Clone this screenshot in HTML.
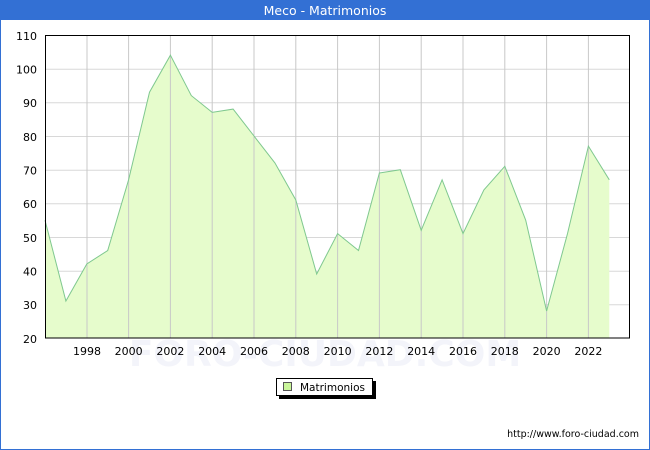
<!DOCTYPE html>
<html><head><meta charset="utf-8"><style>
html,body{margin:0;padding:0;background:#fff}
svg{display:block;font-family:"DejaVu Sans","Liberation Sans",sans-serif}
</style></head><body>
<svg width="650" height="450" viewBox="0 0 650 450">
<rect x="0.5" y="0.5" width="649" height="449" fill="#fff" stroke="#3370d4"/>
<rect x="0" y="0" width="650" height="20" fill="#3370d4"/>
<text x="325" y="15" fill="#fff" font-size="12.5" text-anchor="middle">Meco - Matrimonios</text>
<g stroke="#d8d8d8" stroke-width="1">
<line x1="45" y1="69.2" x2="630" y2="69.2"/><line x1="45" y1="102.8" x2="630" y2="102.8"/>
<line x1="45" y1="136.5" x2="630" y2="136.5"/><line x1="45" y1="170.2" x2="630" y2="170.2"/>
<line x1="45" y1="203.8" x2="630" y2="203.8"/><line x1="45" y1="237.5" x2="630" y2="237.5"/>
<line x1="45" y1="271.2" x2="630" y2="271.2"/><line x1="45" y1="304.8" x2="630" y2="304.8"/>
</g>
<polygon fill="#e6fccc" stroke="none" points="45,338 45,220.2 65.9,301 86.8,264 107.7,250.5 128.6,179.8 149.5,92.2 170.4,55.2 191.3,95.6 212.2,112.4 233.1,109.1 254,136 274.9,162.9 295.8,200 316.7,274 337.6,233.6 358.5,250.5 379.4,173 400.3,169.7 421.2,230.3 442.1,179.8 463,233.6 483.9,189.9 504.8,166.3 525.7,220.2 546.6,311 567.5,233.6 588.4,146.1 609.3,179.8 609.3,338"/>
<g stroke="#c8c8c8" stroke-width="1">
<line x1="87" y1="35" x2="87" y2="338"/><line x1="128.6" y1="35" x2="128.6" y2="338"/>
<line x1="170.4" y1="35" x2="170.4" y2="338"/><line x1="212.2" y1="35" x2="212.2" y2="338"/>
<line x1="254" y1="35" x2="254" y2="338"/><line x1="295.8" y1="35" x2="295.8" y2="338"/>
<line x1="337.6" y1="35" x2="337.6" y2="338"/><line x1="379.4" y1="35" x2="379.4" y2="338"/>
<line x1="421.2" y1="35" x2="421.2" y2="338"/><line x1="463" y1="35" x2="463" y2="338"/>
<line x1="504.8" y1="35" x2="504.8" y2="338"/><line x1="546.6" y1="35" x2="546.6" y2="338"/>
<line x1="588.4" y1="35" x2="588.4" y2="338"/>
</g>
<polyline fill="none" stroke="#7fc88f" stroke-width="1" points="45,220.2 65.9,301 86.8,264 107.7,250.5 128.6,179.8 149.5,92.2 170.4,55.2 191.3,95.6 212.2,112.4 233.1,109.1 254,136 274.9,162.9 295.8,200 316.7,274 337.6,233.6 358.5,250.5 379.4,173 400.3,169.7 421.2,230.3 442.1,179.8 463,233.6 483.9,189.9 504.8,166.3 525.7,220.2 546.6,311 567.5,233.6 588.4,146.1 609.3,179.8"/>
<text x="325" y="366" fill="#f3f4fa" font-size="36" text-anchor="middle" font-weight="bold">FORO-CIUDAD.COM</text>
<rect x="45.5" y="35.5" width="584" height="302.5" fill="none" stroke="#000"/>
<g font-size="11" fill="#000" text-anchor="end">
<text x="37" y="40">110</text><text x="37" y="73.5">100</text><text x="37" y="107">90</text>
<text x="37" y="141">80</text><text x="37" y="174.5">70</text><text x="37" y="208">60</text>
<text x="37" y="242">50</text><text x="37" y="275.5">40</text><text x="37" y="309">30</text>
<text x="37" y="343">20</text>
</g>
<g font-size="11" fill="#000" text-anchor="middle">
<text x="87" y="355">1998</text><text x="128.6" y="355">2000</text><text x="170.4" y="355">2002</text>
<text x="212.2" y="355">2004</text><text x="254" y="355">2006</text><text x="295.8" y="355">2008</text>
<text x="337.6" y="355">2010</text><text x="379.4" y="355">2012</text><text x="421.2" y="355">2014</text>
<text x="463" y="355">2016</text><text x="504.8" y="355">2018</text><text x="546.6" y="355">2020</text>
<text x="588.4" y="355">2022</text>
</g>
<rect x="279" y="381" width="97" height="18" fill="#000"/>
<rect x="276.5" y="378.5" width="96" height="17" fill="#fff" stroke="#000"/>
<rect x="283.5" y="382.5" width="8" height="8" fill="#c9f59a" stroke="#555"/>
<text x="300" y="391" font-size="10.5" fill="#000">Matrimonios</text>
<text x="639" y="437" font-size="9.5" fill="#000" text-anchor="end">http://www.foro-ciudad.com</text>
</svg>
</body></html>
